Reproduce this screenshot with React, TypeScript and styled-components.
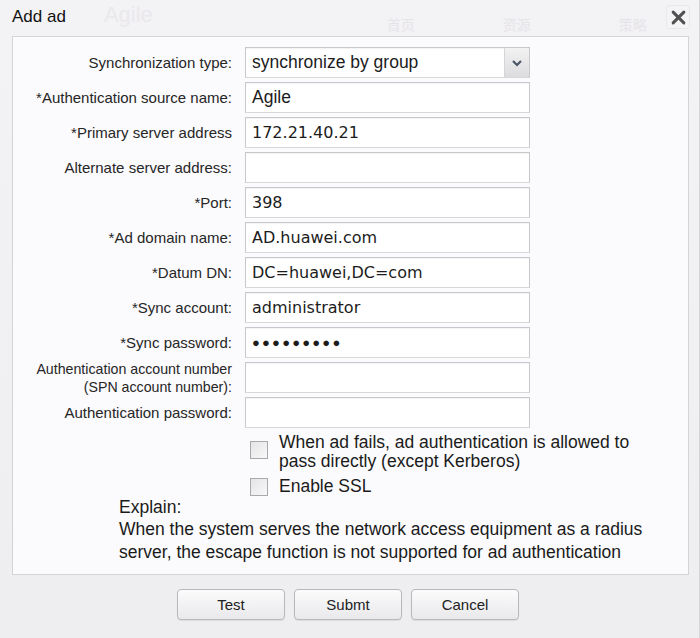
import styled, { createGlobalStyle } from "styled-components";

const GlobalStyle = createGlobalStyle`
  html, body {
    margin: 0;
    padding: 0;
    background: #efeef1;
    font-family: "Liberation Sans", Arial, sans-serif;
  }
`;

type Field = {
  label: string;
  value?: string;
  mono?: boolean;
  password?: boolean;
  select?: boolean;
  small?: boolean;
};

const fields: Field[] = [
  { label: "Synchronization type:", value: "synchronize by group", select: true },
  { label: "*Authentication source name:", value: "Agile" },
  { label: "*Primary server address", value: "172.21.40.21", mono: true },
  { label: "Alternate server address:" },
  { label: "*Port:", value: "398", mono: true },
  { label: "*Ad domain name:", value: "AD.huawei.com", mono: true },
  { label: "*Datum DN:", value: "DC=huawei,DC=com", mono: true },
  { label: "*Sync account:", value: "administrator", mono: true },
  { label: "*Sync password:", value: "●●●●●●●●●", password: true },
  { label: "Authentication account number\n(SPN account number):", small: true },
  { label: "Authentication password:" },
];

export default function App() {
  return (
    <>
      <GlobalStyle />
      <Window>
        <TitleBar>
          <Title>Add ad</Title>
          <Ghost>Agile</Ghost>
          <GhostTabs>
            <span>首页</span>
            <span>资源</span>
            <span>策略</span>
          </GhostTabs>
          <CloseButton>
            <svg width="15" height="15" viewBox="0 0 14 14">
              <path d="M2 2 L12 12 M12 2 L2 12" stroke="#505050" strokeWidth="2.8" strokeLinecap="round" />
            </svg>
          </CloseButton>
        </TitleBar>
        <Panel>
          <Form>
            {fields.map((f) => (
              <Row key={f.label}>
                <Label $small={f.small}>{f.label}</Label>
                {f.select ? (
                  <SelectBox>
                    <SelectText>{f.value}</SelectText>
                    <Arrow>
                      <svg width="12" height="8" viewBox="0 0 12 8">
                        <path d="M2 2 L6 6 L10 2" stroke="#4a5566" strokeWidth="2.2" fill="none" />
                      </svg>
                    </Arrow>
                  </SelectBox>
                ) : (
                  <Input $mono={f.mono} $password={f.password}>
                    {f.value}
                  </Input>
                )}
              </Row>
            ))}
          </Form>
          <Checks>
            <CheckRow $multi>
              <Box />
              <CheckText $multi>
                When ad fails, ad authentication is allowed to
                <br />
                pass directly (except Kerberos)
              </CheckText>
            </CheckRow>
            <CheckRow>
              <Box />
              <CheckText>Enable SSL</CheckText>
            </CheckRow>
          </Checks>
          <Explain>
            <ExplainTitle>Explain:</ExplainTitle>
            <ExplainText>
              When the system serves the network access equipment as a radius
              <br />
              server, the escape function is not supported for ad authentication
            </ExplainText>
          </Explain>
        </Panel>
        <Footer>
          <Button>Test</Button>
          <Button>Submt</Button>
          <Button>Cancel</Button>
        </Footer>
      </Window>
    </>
  );
}

const Window = styled.div`
  width: 700px;
  height: 638px;
  display: flex;
  flex-direction: column;
  background: linear-gradient(#f3f2f4, #eeedf0);
  box-sizing: border-box;
  border-right: 1px solid #d6d5d8;
  overflow: hidden;
`;

const TitleBar = styled.div`
  height: 36px;
  position: relative;
  display: flex;
  align-items: center;
  padding-left: 12px;
  flex-shrink: 0;
`;

const Title = styled.div`
  font-size: 17px;
  color: #111;
  margin-top: -3px;
`;

const Ghost = styled.div`
  font-size: 22px;
  color: #eae8ec;
  margin-left: 38px;
  margin-top: -6px;
`;

const GhostTabs = styled.div`
  display: flex;
  gap: 88px;
  margin-left: 234px;
  margin-top: 12px;
  font-family: "Noto Sans CJK SC", sans-serif;
  font-size: 14px;
  color: #e6e4e9;
`;

const CloseButton = styled.div`
  position: absolute;
  right: 9px;
  top: 5px;
  width: 22px;
  height: 22px;
  display: flex;
  align-items: center;
  justify-content: center;
  border: 1px solid #e8e7ea;
  border-radius: 3px;
  background: #f4f3f5;
`;

const Panel = styled.div`
  margin: 0 10px 0 12px;
  height: 539px;
  box-sizing: border-box;
  border: 1px solid #d4d3d6;
  background: #fbfafc;
  padding-top: 10px;
  flex-shrink: 0;
`;

const Form = styled.div`
  display: flex;
  flex-direction: column;
  gap: 4px;
`;

const Row = styled.div`
  display: grid;
  grid-template-columns: 219px 285px;
  grid-template-rows: 31px;
  column-gap: 13px;
  height: 31px;
  align-items: center;
`;

const Label = styled.div<{ $small?: boolean }>`
  text-align: right;
  font-size: ${(p) => (p.$small ? "14.2px" : "15px")};
  line-height: 18px;
  color: #262626;
  white-space: pre-line;
`;

const fieldBox = `
  height: 31px;
  box-sizing: border-box;
  border: 1px solid #c8c7cb;
  border-bottom-color: #d8d7da;
  background: #fff;
  box-shadow: inset 0 1px 1px rgba(0, 0, 0, 0.05);
`;

const Input = styled.div<{ $mono?: boolean; $password?: boolean }>`
  ${fieldBox}
  display: flex;
  align-items: center;
  padding-left: 6px;
  color: #1c1c1c;
  font-family: ${(p) => (p.$mono ? '"DejaVu Sans", Verdana, sans-serif' : '"Liberation Sans", Arial, sans-serif')};
  font-size: ${(p) => (p.$mono ? "16px" : p.$password ? "13px" : "17.5px")};
  letter-spacing: ${(p) => (p.$password ? "2.2px" : "0")};
`;

const SelectBox = styled.div`
  ${fieldBox}
  display: flex;
  align-items: center;
`;

const SelectText = styled.div`
  flex: 1;
  padding-left: 6px;
  font-size: 17.5px;
  color: #1c1c1c;
`;

const Arrow = styled.div`
  width: 24px;
  height: 100%;
  display: flex;
  align-items: center;
  justify-content: center;
  background: linear-gradient(#f2f2f3, #dcdcdf);
  border-left: 1px solid #d6d6d9;
`;

const Checks = styled.div`
  display: flex;
  flex-direction: column;
  gap: 6px;
  padding-left: 237px;
  margin-top: 13px;
`;

const CheckRow = styled.div<{ $multi?: boolean }>`
  display: flex;
  align-items: ${(p) => (p.$multi ? "flex-start" : "center")};
  gap: 11px;
`;

const Box = styled.div`
  width: 18px;
  height: 18px;
  box-sizing: border-box;
  border: 1px solid #a9a9ad;
  background: linear-gradient(135deg, #e4e4e6, #f8f8f9);
  flex-shrink: 0;
`;

const CheckText = styled.div<{ $multi?: boolean }>`
  font-size: 17.5px;
  line-height: 19px;
  color: #1a1a1a;
  margin-top: ${(p) => (p.$multi ? "-8px" : "0")};
`;

const Explain = styled.div`
  padding-left: 106px;
  color: #1a1a1a;
  font-size: 17.5px;
`;

const ExplainTitle = styled.div`
  line-height: 22px;
`;

const ExplainText = styled.div`
  line-height: 23px;
`;

const Footer = styled.div`
  display: flex;
  justify-content: center;
  gap: 9px;
  padding-top: 14px;
  padding-right: 3px;
`;

const Button = styled.div`
  width: 108px;
  height: 31px;
  box-sizing: border-box;
  border: 1px solid #b8b8bc;
  border-radius: 4px;
  background: linear-gradient(#fbfbfc, #e9e9eb);
  box-shadow: 0 1px 1px rgba(0, 0, 0, 0.08);
  display: flex;
  align-items: center;
  justify-content: center;
  font-size: 15px;
  color: #222;
`;
